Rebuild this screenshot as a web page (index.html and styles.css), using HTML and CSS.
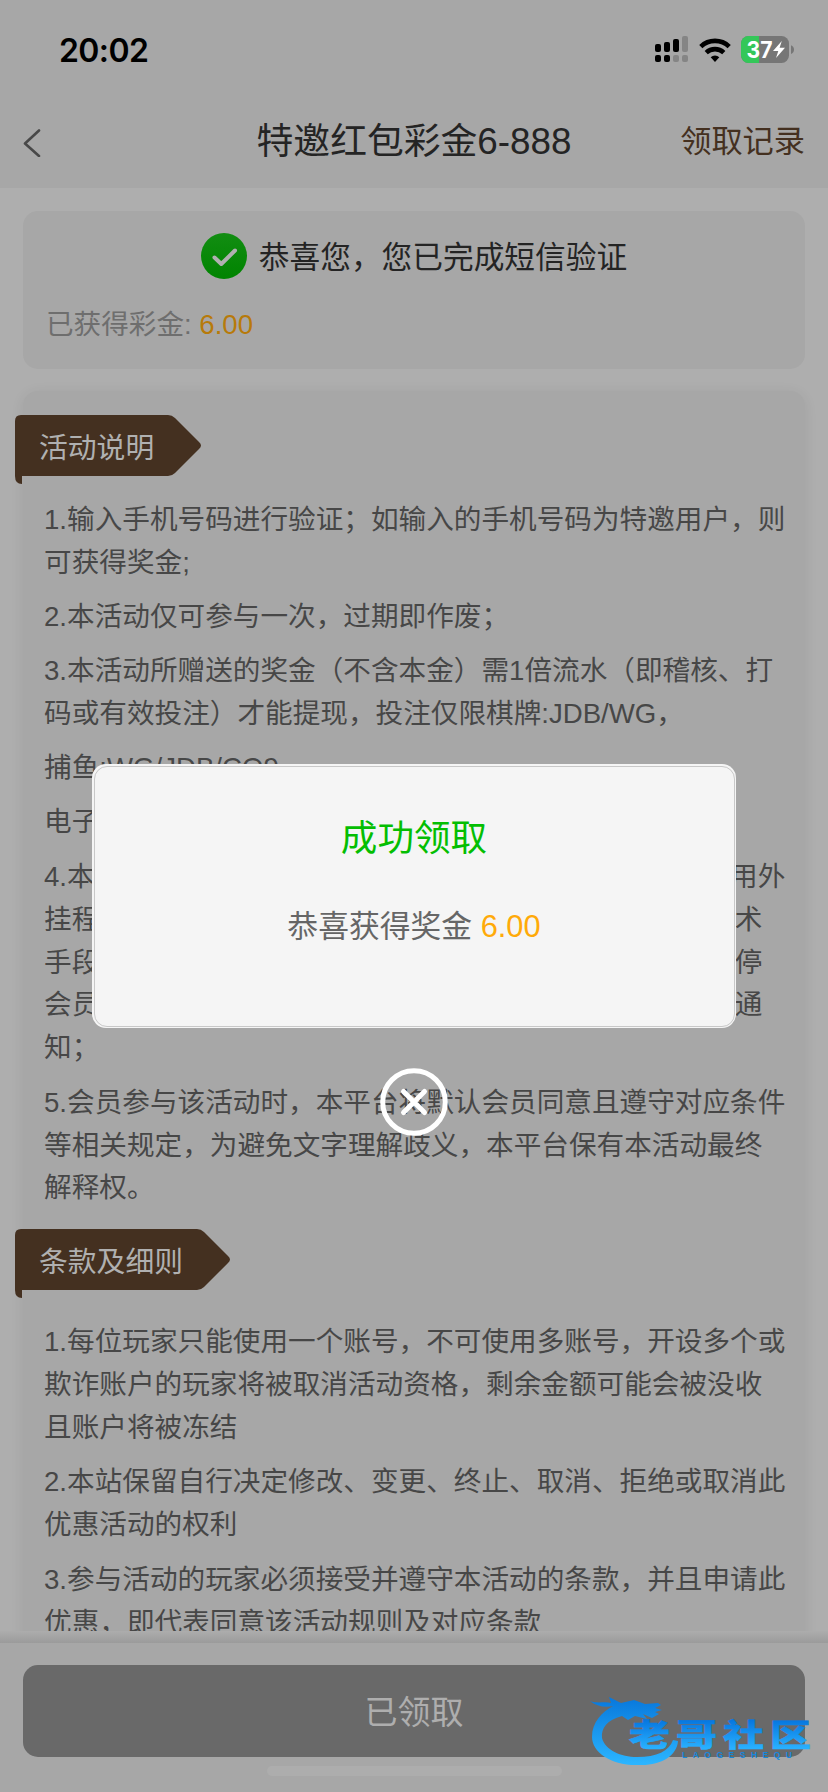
FILE: index.html
```html
<!DOCTYPE html>
<html lang="zh-CN">
<head>
<meta charset="utf-8">
<title>特邀红包彩金6-888</title>
<link rel="stylesheet" href="styles.css">
</head>
<body>
<div class="screen">
  <header class="top">
    <div class="status">
      <span class="time">20:02</span>
      <div class="status-icons">
        <svg class="signal" width="34" height="27" viewBox="0 0 34 27">
          <g fill="#000"><rect x="0" y="8" width="6" height="8" rx="2"/><rect x="9" y="6" width="6" height="10" rx="2"/><rect x="18" y="3" width="6" height="13" rx="2"/><rect x="0" y="19" width="6" height="7" rx="2"/><rect x="9" y="19" width="6" height="7" rx="2"/></g>
          <g fill="#858585"><rect x="27" y="0" width="6" height="16" rx="2"/><rect x="18" y="19" width="6" height="7" rx="2"/><rect x="27" y="19" width="6" height="7" rx="2"/></g>
        </svg>
        <svg class="wifi" width="32" height="24" viewBox="0 0 32 24">
          <g fill="none" stroke="#000" stroke-width="4.6"><path d="M1.800 8.600a20.500 20.500 0 0 1 28.400 0"/><path d="M7.200 14.600a12.800 12.800 0 0 1 17.600 0"/></g>
          <path d="M11.700 19.200a6.200 6.200 0 0 1 8.600 0L16 24z" fill="#000"/>
        </svg>
        <svg class="battery" width="54" height="27" viewBox="0 0 54 27">
          <defs><clipPath id="cell"><rect width="48" height="27" rx="7.500"/></clipPath></defs>
          <g clip-path="url(#cell)"><rect width="48" height="27" fill="#767676"/><rect width="18" height="27" fill="#34c759"/></g>
          <path d="M50 9.200c4 1.300 4 7.400 0 8.700z" fill="#767676"/>
          <text x="5.500" y="21.700" class="battery-text" textLength="26" lengthAdjust="spacingAndGlyphs">37</text>
          <path d="M40.800 5L32 14.900h5.300L35 22l9-10.200h-5.400z" fill="#fff"/>
        </svg>
      </div>
    </div>
    <nav class="nav">
      <svg class="back" width="18" height="28" viewBox="0 0 18 28"><path d="M16 1.500L2 14.500l14 12.500" fill="none" stroke="#484848" stroke-width="2.600" stroke-linecap="round" stroke-linejoin="round"/></svg>
      <h1 class="title">特邀红包彩金6-888</h1>
      <a class="records">领取记录</a>
    </nav>
  </header>

  <main class="content">
    <section class="card result">
      <div class="result-head">
        <svg width="46" height="46" viewBox="0 0 46 46"><defs><linearGradient id="ok" x1="0" y1="0" x2="0" y2="1"><stop offset="0" stop-color="#128d12"/><stop offset="1" stop-color="#008400"/></linearGradient></defs><circle cx="23" cy="23" r="23" fill="url(#ok)"/><path d="M13.500 24.500l6.800 6.500L34 17.500" fill="none" stroke="#b0b0b0" stroke-width="4" stroke-linecap="round" stroke-linejoin="round"/></svg>
        <span>恭喜您，您已完成短信验证</span>
      </div>
      <div class="earned">已获得彩金: <b>6.00</b></div>
    </section>

    <section class="card rules">
      <h2 class="tag">
        <svg width="186" height="70" viewBox="0 0 186 70"><path d="M6 0H153Q157 0 160 3L184 27Q188 30.500 184 34L160 58Q157 61 153 61H7V69Q0 69 0 61V6Q0 0 6 0Z" fill="#443020"/></svg>
        <span>活动说明</span>
      </h2>
      <div class="text">
        <p>1.输入手机号码进行验证；如输入的手机号码为特邀用户，则<br>可获得奖金;</p>
        <p>2.本活动仅可参与一次，过期即作废；</p>
        <p>3.本活动所赠送的奖金（不含本金）需1倍流水（即稽核、打<br>码或有效投注）才能提现，投注仅限棋牌:JDB/WG，</p>
        <p>捕鱼:WG/JDB/CQ9</p>
        <p>电子</p>
        <p>4.本活动仅限账号所有者进行正常人为操作，禁止租借使用外<br>挂程序、机器人、不同账号对打、互刷、套利、协议等技术<br>手段参与，一经查实，本平台可禁止登录、冻结账号、暂停<br>会员使用网站、没收奖金和不当盈利的权利，无需再另行通<br>知；</p>
        <p>5.会员参与该活动时，本平台将默认会员同意且遵守对应条件<br>等相关规定，为避免文字理解歧义，本平台保有本活动最终<br>解释权。</p>
      </div>
      <h2 class="tag">
        <svg width="215" height="70" viewBox="0 0 215 70"><path d="M6 0H182Q186 0 189 3L213 27Q217 30.500 213 34L189 58Q186 61 182 61H7V69Q0 69 0 61V6Q0 0 6 0Z" fill="#443020"/></svg>
        <span>条款及细则</span>
      </h2>
      <div class="text terms">
        <p>1.每位玩家只能使用一个账号，不可使用多账号，开设多个或<br>欺诈账户的玩家将被取消活动资格，剩余金额可能会被没收<br>且账户将被冻结</p>
        <p>2.本站保留自行决定修改、变更、终止、取消、拒绝或取消此<br>优惠活动的权利</p>
        <p>3.参与活动的玩家必须接受并遵守本活动的条款，并且申请此<br>优惠，即代表同意该活动规则及对应条款</p>
      </div>
    </section>
  </main>

  <div class="fade"></div>
  <footer class="bottom">
    <div class="claim">已领取</div>
    <div class="home"></div>
  </footer>

  <div class="overlay">
    <div class="dialog">
      <div class="dialog-in">
        <h3>成功领取</h3>
        <p>恭喜获得奖金 <b>6.00</b></p>
      </div>
    </div>
    <svg class="close" width="68" height="68" viewBox="0 0 68 68"><g fill="none" stroke="#fff" stroke-width="5"><circle cx="34" cy="34" r="31.300"/><path d="M23.500 23.500l21 21M44.500 23.500l-21 21" stroke-linecap="round"/></g></svg>
  </div>

  <svg class="watermark" width="238" height="82" viewBox="0 0 238 82">
    <defs>
      <linearGradient id="blue" gradientUnits="userSpaceOnUse" x1="0" y1="8" x2="0" y2="74"><stop offset="0" stop-color="#0878dc"/><stop offset="1" stop-color="#2bb5ff"/></linearGradient>
      <linearGradient id="ink" gradientUnits="userSpaceOnUse" x1="0" y1="30" x2="0" y2="58"><stop offset="0" stop-color="#0676df"/><stop offset="1" stop-color="#28b0ff"/></linearGradient>
    </defs>
    <path fill="url(#blue)" d="M5 11C13 14 20 11 26 13L24 7L36 13L49 10L60 14L73 13L76 15L70 18L77 20L70 22L74 24L67 28L58 24L62 29L50 26L43 30L37 26C22 30 16 38 17 48C20 60 36 67 52 67C72 67 84 61 88 50L93 51C92 66 75 76 54 75C26 76 7 62 7 47C7 32 17 22 28 16C20 18 11 16 5 11Z"/>
    <g transform="translate(44 0) scale(1.320 1)"><text class="wm-text" x="0" y="56" fill="url(#ink)" stroke="url(#ink)">老哥社区</text></g>
    <text class="wm-latin" x="97" y="68" textLength="110">LAOGESHEQU</text>
  </svg>
</div>
</body>
</html>
```
FILE: styles.css
```css
* { box-sizing: border-box; }
body { margin: 0; font-family: "Liberation Sans", "Noto Sans CJK SC", sans-serif; text-spacing-trim: space-all; }
h1, h2, h3, p { margin: 0; font-weight: 400; }
b { font-weight: 400; }
svg { display: block; flex: none; }

.screen { position: relative; width: 828px; height: 1792px; overflow: hidden; background: #aeaeae; display: flex; flex-direction: column; white-space: nowrap; }

.top { height: 188px; flex: none; background: #a7a7a7; }
.status { height: 97px; padding: 0 33px 0 59px; display: flex; align-items: center; justify-content: space-between; }
.time { font: 600 32px/40px Inter, sans-serif; letter-spacing: -.6px; color: #000; padding-top: 4px; }
.status-icons { display: flex; align-items: center; gap: 10px; padding-top: 2px; }
.battery-text { font: 700 22.500px Inter, sans-serif; fill: #fff; }
.nav { height: 91px; padding: 0 23px; display: grid; grid-template-columns: 180px 1fr 180px; align-items: center; }
.title { font-size: 36.800px; line-height: 50px; color: #242424; text-align: center; margin-top: -1px; }
.records { font-size: 31.200px; line-height: 44px; color: #443020; text-align: right; margin-top: -2px; }

.content { height: 1443px; flex: none; overflow: hidden; padding: 23px 23px 0; display: flex; flex-direction: column; gap: 22px; }
.card { background: #a7a7a7; border-radius: 15px; flex: none; }
.result { height: 158px; padding: 22px 25px 0; }
.result-head { height: 46px; display: flex; align-items: center; justify-content: center; gap: 12px; font-size: 30.700px; color: #242424; }
.result-head span { padding-bottom: 4px; }
.earned { margin: 26px 0 0 -2px; font-size: 27.600px; line-height: 40px; color: #6e6e6e; }
.earned b { color: #b77a0a; }

.rules { padding: 24px 0 40px; box-shadow: 0 2px 14px rgba(0, 0, 0, .07); }
.tag { display: grid; width: max-content; height: 70px; margin-left: -8px; }
.tag > * { grid-area: 1 / 1; }
.tag span { padding-left: 24px; font-size: 28.800px; line-height: 61px; color: #b0b0b0; padding-top: 3px; }
.text { padding: 14px 0 0 21px; font-size: 27.640px; line-height: 42.950px; color: #474747; }
.text p + p { margin-top: 11.200px; }
.text + .tag { margin-top: 19px; }
.terms { padding-top: 22px; }

.fade { height: 12px; flex: none; background: linear-gradient(#adadad, #9b9b9b); }
.bottom { flex: 1; background: #a7a7a7; padding: 22px 23px 0; }
.claim { height: 92px; border-radius: 15px; background: #696969; color: #aeaeae; font-size: 33px; line-height: 92px; text-align: center; padding-top: 2px; }
.home { width: 295px; height: 10px; margin: 9px auto 0; border-radius: 5px; background: #adadad; }

.overlay { position: absolute; inset: 0; padding-top: 764px; display: flex; flex-direction: column; align-items: center; gap: 40px; }
.dialog { width: 644px; height: 264px; padding: 1.500px; border-radius: 14px; background: #f5f5f5; }
.dialog-in { height: 100%; border: 1.500px solid #c8c8c8; border-radius: 13px; text-align: center; padding-top: 45px; }
.dialog h3 { font-size: 36.600px; line-height: 54px; color: #04be02; }
.dialog p { margin-top: 39px; font-size: 30.800px; line-height: 44px; color: #666; }
.dialog b { color: #ffaa09; }

.watermark { position: absolute; left: 585px; top: 1690px; }
.wm-text { font: 900 31px "Noto Sans CJK SC", sans-serif; letter-spacing: 4.600px; stroke-width: .5px; }
.wm-latin { font: 700 8.500px "Liberation Sans", sans-serif; fill: #1687dd; }
```
